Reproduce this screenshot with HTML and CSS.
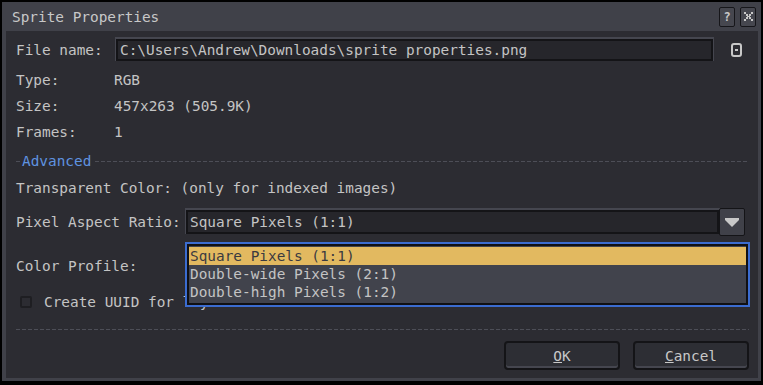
FILE: index.html
```html
<!DOCTYPE html>
<html lang="en">
<head>
    <meta charset="UTF-8">
    <title>Sprite Properties</title>
    <link rel="stylesheet" href="styles.css">
</head>
<body>
    <div class="window">
        <div class="titlebar">
            <span class="title">Sprite Properties</span>
            <div class="title-buttons">
                <div class="tbtn">?</div>
                <div class="tbtn">
                    <svg width="9" height="9" viewBox="0 0 9 9"><path d="M0 0h2v2H0zM7 0h2v2H7zM2 2h2v2H2zM5 2h2v2H5zM3 4h3v1H3zM2 5h2v2H2zM5 5h2v2H5zM0 7h2v2H0zM7 7h2v2H7z" fill="#c8c8c8"/></svg>
                </div>
            </div>
        </div>
        <div class="content">
            <div class="row file-row">
                <span class="label wide">File name:</span>
                <div class="entry">C:\Users\Andrew\Downloads\sprite properties.png</div>
                <svg class="file-icon" width="11" height="14" viewBox="0 0 11 14"><rect x="1" y="1" width="9" height="12" rx="2" fill="none" stroke="#c8c8c8" stroke-width="2"/><rect x="4" y="6" width="3" height="2" fill="#c8c8c8"/></svg>
            </div>
            <div class="row info first">
                <span class="label">Type:</span><span>RGB</span>
            </div>
            <div class="row info">
                <span class="label">Size:</span><span>457x263 (505.9K)</span>
            </div>
            <div class="row info">
                <span class="label">Frames:</span><span>1</span>
            </div>
            <div class="row section">
                <span class="dash short"></span>
                <span class="section-name">Advanced</span>
                <span class="dash"></span>
            </div>
            <div class="row transparent">
                <span>Transparent Color: (only for indexed images)</span>
            </div>
            <div class="row combo-row">
                <span class="label combo-label">Pixel Aspect Ratio:</span>
                <div class="combo">Square Pixels (1:1)</div>
                <div class="combo-btn">
                    <svg width="14" height="9" viewBox="0 0 14 9"><path d="M0 0h14v2l-7 7-7-7z" fill="#c8c8c8"/></svg>
                </div>
            </div>
            <div class="row profile-row">
                <span class="label combo-label">Color Profile:</span>
            </div>
            <div class="row check-row">
                <span class="checkbox"></span>
                <span>Create UUID for layers</span>
            </div>
            <div class="separator"></div>
            <div class="buttons">
                <button class="btn"><u>O</u>K</button>
                <button class="btn"><u>C</u>ancel</button>
            </div>
        </div>
    </div>
    <div class="popup">
        <div class="item selected">Square Pixels (1:1)</div>
        <div class="item">Double-wide Pixels (2:1)</div>
        <div class="item">Double-high Pixels (1:2)</div>
    </div>
</body>
</html>
```

FILE: styles.css
```css
body {
    margin: 0;
    background-color: #000;
    color: #c4c4c4;
    font-family: "DejaVu Sans Mono", "Liberation Mono", monospace;
    font-size: 14.4px;
}
.window {
    margin: 2px;
    width: 759px;
    height: 379px;
    box-sizing: border-box;
    background-color: #404149;
    padding: 0 3px 3px 4px;
    display: flex;
    flex-direction: column;
}
.titlebar {
    height: 29px;
    display: flex;
    align-items: center;
    justify-content: space-between;
    padding-left: 6px;
}
.title {
    color: #c8c8c8;
}
.title-buttons {
    display: flex;
    gap: 5px;
    margin-right: 2px;
}
.tbtn {
    width: 14px;
    height: 18px;
    border: 1px solid #16161a;
    border-radius: 2px;
    background-color: #46474f;
    display: flex;
    align-items: center;
    justify-content: center;
    font-size: 12px;
    font-weight: bold;
    color: #c8c8c8;
}
.content {
    flex: 1;
    background-color: #2c2c32;
    padding: 8px 9px 0 10px;
    display: flex;
    flex-direction: column;
}
.row {
    display: flex;
    align-items: center;
    height: 18px;
    white-space: nowrap;
}
.label {
    width: 98px;
    flex-shrink: 0;
}
.label.wide {
    width: 100px;
}
.file-row {
    height: 22px;
}
.entry {
    width: 591px;
    height: 18px;
    line-height: 18px;
    padding-left: 2px;
    border: 2px solid #141417;
    background-color: #26262b;
    box-shadow: 0 -1px 0 1px #45464f;
}
.file-icon {
    margin-left: 18px;
}
.info.first {
    margin-top: 10px;
}
.info {
    margin-top: 8px;
}
.section {
    margin-top: 11px;
}
.dash {
    flex: 1;
    height: 1px;
    background: repeating-linear-gradient(to right, #4d4e57 0 4px, transparent 4px 6px);
}
.dash.short {
    flex: 0 0 5px;
}
.section-name {
    color: #5f93e0;
    margin: 0 4px 0 1px;
}
.transparent {
    margin-top: 9px;
}
.combo-row {
    margin-top: 13px;
    height: 24px;
}
.combo-label {
    width: 168px;
}
.combo {
    width: 527px;
    height: 20px;
    line-height: 20px;
    padding-left: 2px;
    border: 2px solid #141417;
    background-color: #26262b;
    box-shadow: 0 -1px 0 1px #45464f;
    margin-left: 2px;
}
.combo-btn {
    width: 24px;
    height: 26px;
    border: 1px solid #141417;
    border-radius: 2px;
    background-color: #404149;
    display: flex;
    align-items: center;
    justify-content: center;
}
.profile-row {
    margin-top: 23px;
}
.check-row {
    margin-top: 18px;
}
.checkbox {
    width: 8px;
    height: 8px;
    border: 2px solid #1e1e22;
    border-radius: 2px;
    margin: 0 12px 0 4px;
}
.separator {
    margin-top: 18px;
    height: 1px;
    background: repeating-linear-gradient(to right, #4d4e57 0 4px, transparent 4px 6px);
}
.buttons {
    margin-top: 11px;
    display: flex;
    justify-content: flex-end;
    gap: 13px;
}
.btn {
    width: 116px;
    height: 29px;
    border: 2px solid #141417;
    border-radius: 4px;
    background-color: #2d2e34;
    box-shadow: inset 0 -2px 0 #45464f;
    color: #c8c8c8;
    font-family: inherit;
    font-size: 14.4px;
    padding: 0;
}
.popup {
    position: absolute;
    left: 185px;
    top: 242px;
    width: 557px;
    height: 56px;
    border: 2px solid #3b6cd0;
    box-shadow: inset 0 0 0 2px #101013;
    background-color: #41434c;
    padding: 3px 2px 2px 2px;
}
.item {
    height: 18px;
    line-height: 18px;
    padding-left: 1px;
    white-space: nowrap;
}
.item.selected {
    background-color: #e2b960;
    color: #3a3a40;
}
```
